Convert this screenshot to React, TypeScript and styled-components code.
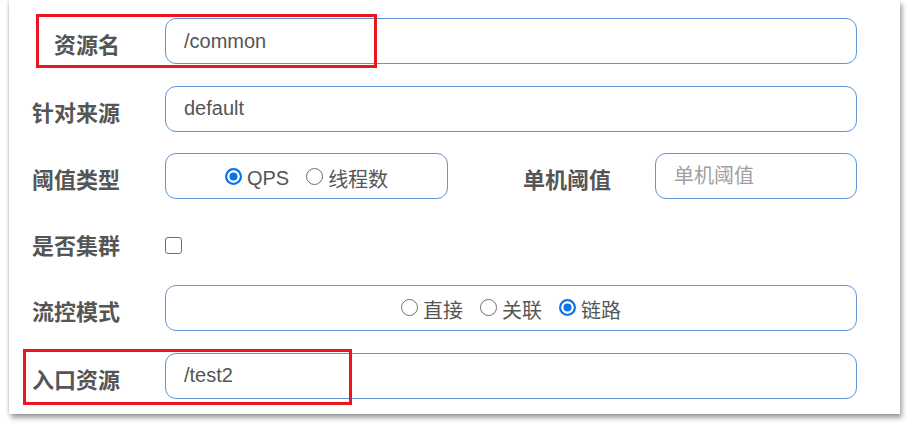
import React from 'react';
import styled, { createGlobalStyle } from 'styled-components';

const GlobalStyle = createGlobalStyle`
  body {
    margin: 0;
    background: #fff;
    font-family: "Liberation Sans", "Noto Sans CJK SC", sans-serif;
  }
`;

const Page = styled.div`
  padding-left: 9px;
  width: 909px;
  height: 430px;
  box-sizing: border-box;
  overflow: hidden;
`;

const Card = styled.div`
  position: relative;
  width: 891px;
  height: 414px;
  box-sizing: border-box;
  padding: 18px 43px 0 0;
  background: #fff;
  box-shadow: 2px 4px 5px rgba(0, 0, 0, 0.38), -1px 0 2px rgba(0, 0, 0, 0.12);
`;

const Form = styled.div`
  display: flex;
  flex-direction: column;
  gap: 21.6px;
`;

const Row = styled.div<{ $h?: number }>`
  display: flex;
  align-items: center;
  height: ${p => p.$h ?? 46}px;
`;

const Label = styled.div<{ $w?: number; $gap?: number }>`
  flex-shrink: 0;
  width: ${p => p.$w ?? 111}px;
  margin-right: ${p => p.$gap ?? 45}px;
  padding-top: 4px;
  text-align: right;
  font-family: "Noto Sans CJK SC", sans-serif;
  font-size: 22px;
  font-weight: 700;
  color: #555;
  white-space: nowrap;
`;

const Input = styled.input<{ $w?: number }>`
  box-sizing: border-box;
  ${p => (p.$w ? `width: ${p.$w}px; flex-shrink: 0;` : 'flex: 1; min-width: 0;')}
  height: 46px;
  padding: 0 18px;
  border: 1px solid #5f96d3;
  border-radius: 11px;
  background: #fff;
  outline: none;
  font-family: "Liberation Sans", "Noto Sans CJK SC", sans-serif;
  font-size: 20px;
  color: #555;

  &::placeholder {
    color: #a0a0a0;
  }
`;

const RadioBox = styled.div<{ $w?: number; $shift?: number }>`
  box-sizing: border-box;
  ${p => (p.$w ? `width: ${p.$w}px; flex-shrink: 0;` : 'flex: 1;')}
  height: 46px;
  display: flex;
  align-items: center;
  justify-content: center;
  gap: 17px;
  padding-top: ${p => p.$shift ?? 4}px;
  border: 1px solid #5f96d3;
  border-radius: 11px;
`;

const Option = styled.label`
  display: flex;
  align-items: center;
  gap: 5px;
  font-family: "Liberation Sans", "Noto Sans CJK SC", sans-serif;
  font-size: 20px;
  color: #555;
`;

const Dot = styled.span<{ $on?: boolean }>`
  flex-shrink: 0;
  box-sizing: border-box;
  width: 17px;
  height: 17px;
  margin-top: -4px;
  border-radius: 50%;
  border: ${p => (p.$on ? '2px solid #0b74e6' : '1.5px solid #6e6e6e')};
  background: ${p => (p.$on ? '#0b74e6' : '#fff')};
  box-shadow: ${p => (p.$on ? 'inset 0 0 0 2.5px #fff' : 'none')};
`;

const Check = styled.span`
  flex-shrink: 0;
  box-sizing: border-box;
  width: 17px;
  height: 17px;
  margin-top: 7px;
  border: 1.5px solid #6e6e6e;
  border-radius: 3px;
  background: #fff;
`;

const Mark = styled.div<{ $x: number; $y: number; $w: number; $h: number }>`
  position: absolute;
  left: ${p => p.$x}px;
  top: ${p => p.$y}px;
  width: ${p => p.$w}px;
  height: ${p => p.$h}px;
  box-sizing: border-box;
  border: 3px solid #ea1520;
  pointer-events: none;
`;

const Radio = ({ on, text }: { on?: boolean; text: string }) => (
  <Option>
    <Dot $on={on} />
    {text}
  </Option>
);

export default function App() {
  return (
    <>
      <GlobalStyle />
      <Page>
        <Card>
          <Form>
            <Row>
              <Label>资源名</Label>
              <Input readOnly value="/common" />
            </Row>
            <Row>
              <Label>针对来源</Label>
              <Input readOnly value="default" />
            </Row>
            <Row>
              <Label>阈值类型</Label>
              <RadioBox $w={283} $shift={5}>
                <Radio on text="QPS" />
                <Radio text="线程数" />
              </RadioBox>
              <Label $w={163} $gap={44}>单机阈值</Label>
              <Input $w={202} placeholder="单机阈值" />
            </Row>
            <Row $h={43}>
              <Label>是否集群</Label>
              <Check />
            </Row>
            <Row>
              <Label>流控模式</Label>
              <RadioBox $shift={3}>
                <Radio text="直接" />
                <Radio text="关联" />
                <Radio on text="链路" />
              </RadioBox>
            </Row>
            <Row>
              <Label>入口资源</Label>
              <Input readOnly value="/test2" />
            </Row>
          </Form>
          <Mark $x={27} $y={14} $w={341} $h={54} />
          <Mark $x={14} $y={349} $w={329} $h={56} />
        </Card>
      </Page>
    </>
  );
}
